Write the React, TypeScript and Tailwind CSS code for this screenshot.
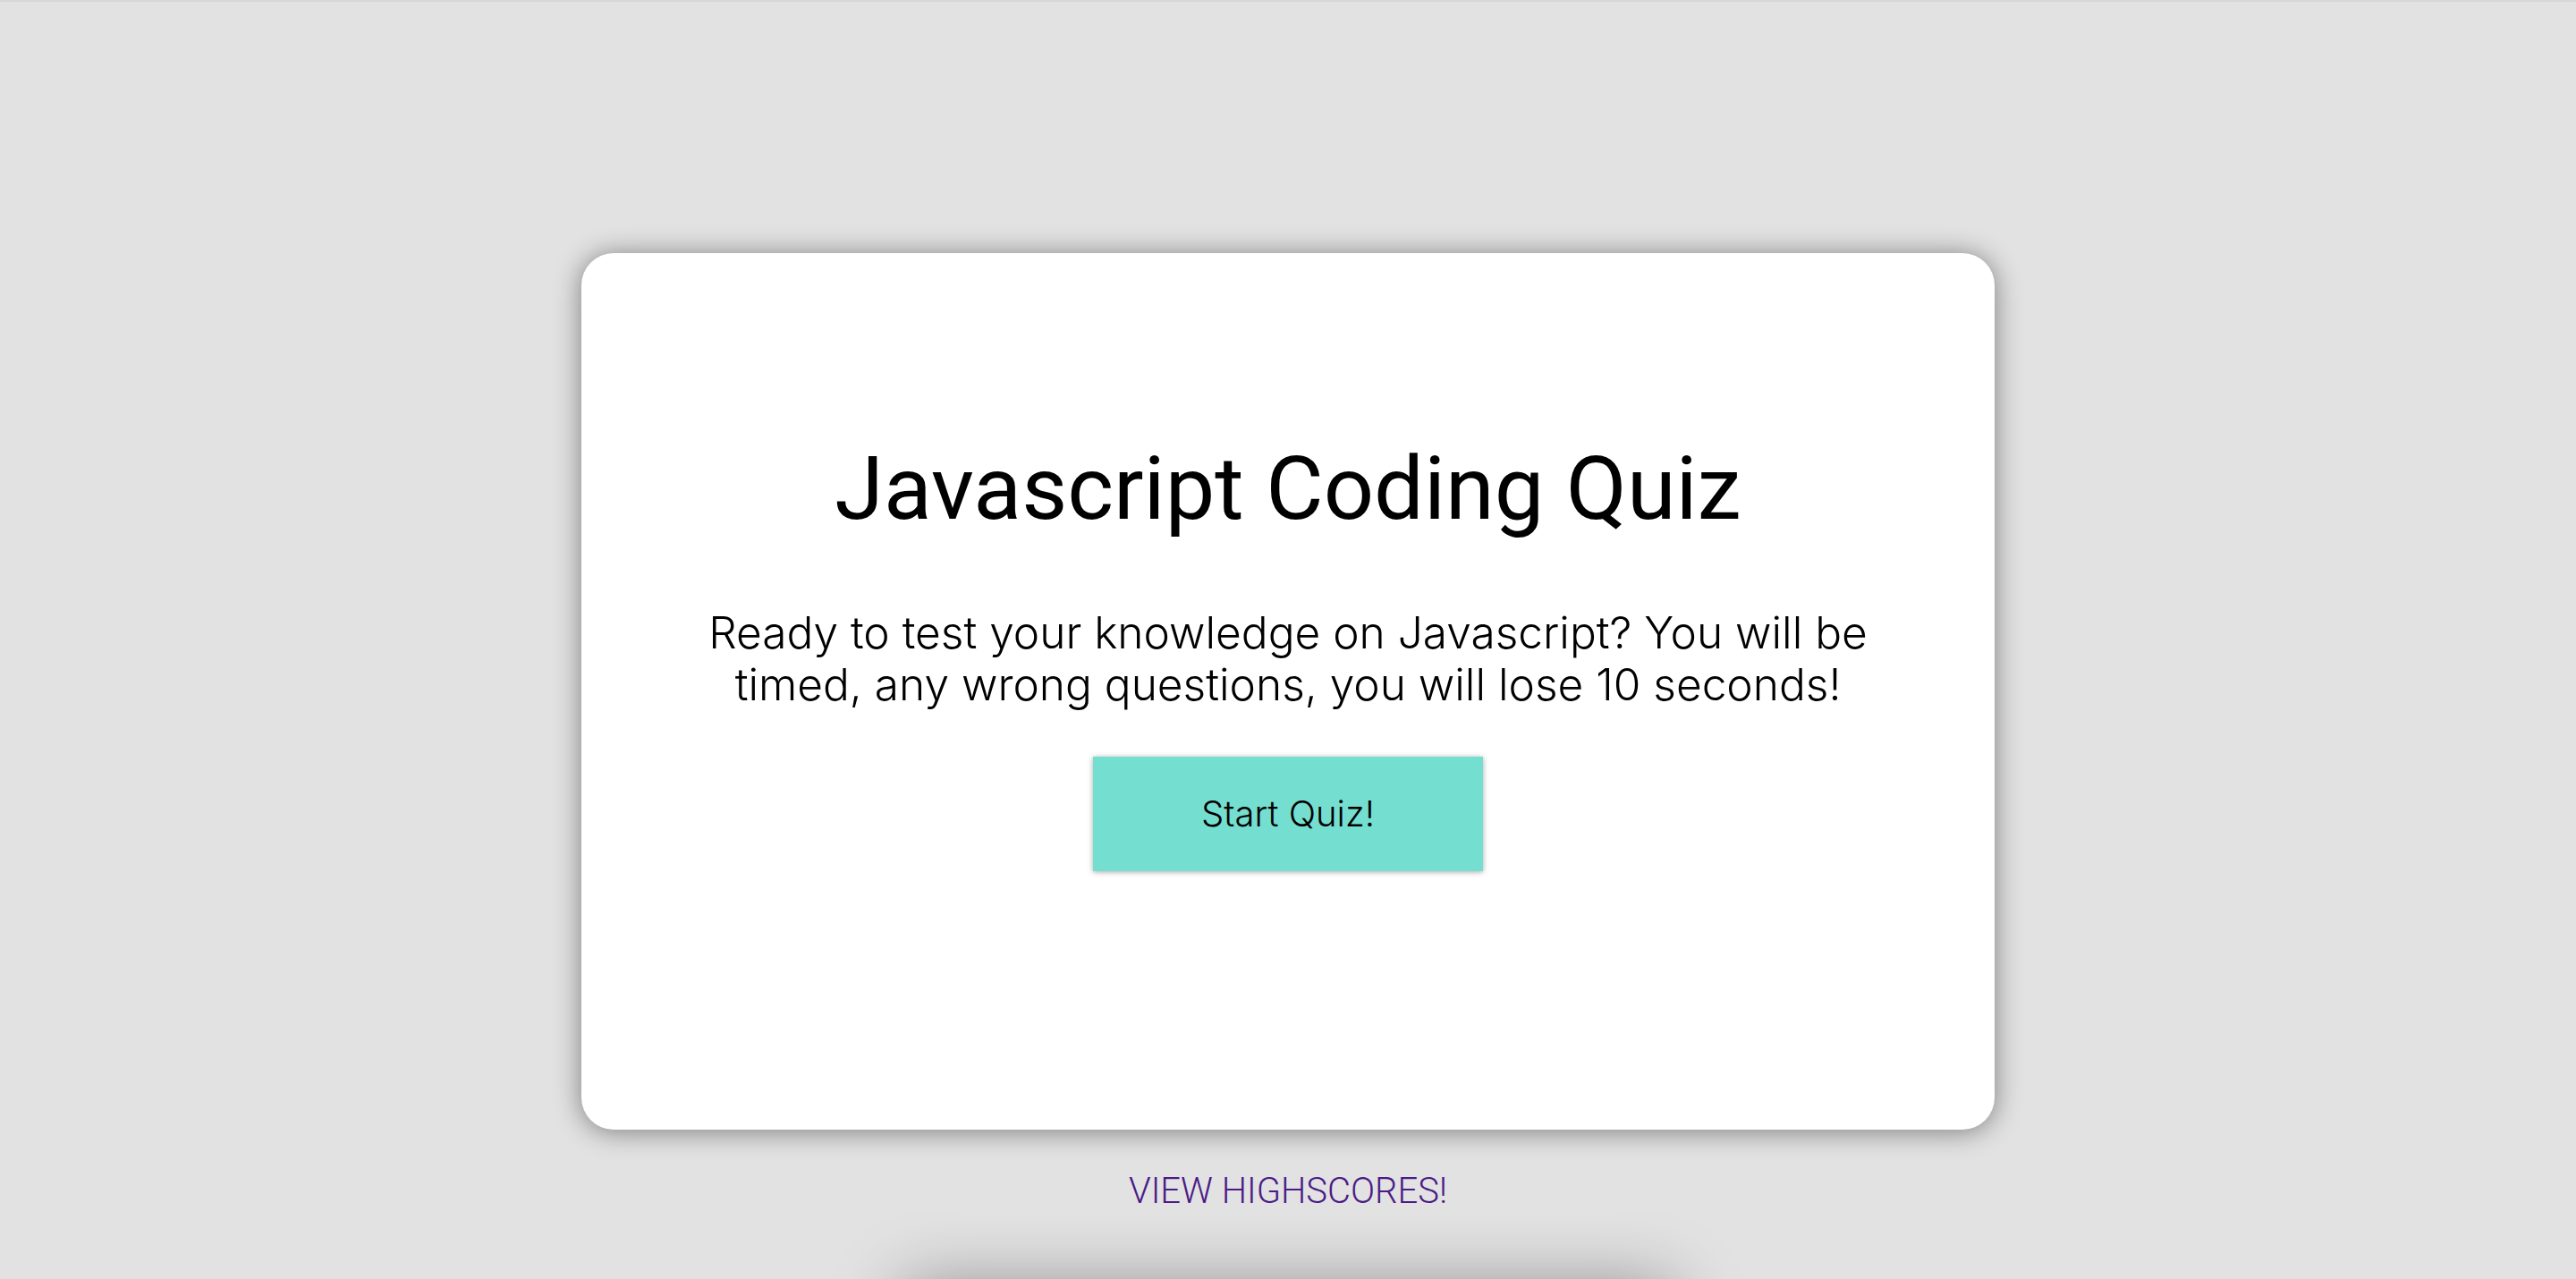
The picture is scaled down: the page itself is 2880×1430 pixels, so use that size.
export default function App() {
  return (
    <div className="min-h-screen w-full bg-[#e2e2e2] border-t-2 border-[#d6d6d6] flex flex-col items-center overflow-hidden">
      <div className="mt-[281px] w-[1580px] h-[980px] bg-white rounded-[36px] shadow-[0_2px_30px_rgba(0,0,0,0.45)] flex flex-col items-center pt-[189px]">
        <h1 className="text-[99px] leading-normal text-black font-normal font-['Roboto',sans-serif]">
          Javascript Coding Quiz
        </h1>
        <p className="mt-[57px] w-[1400px] text-center text-[49.6px] leading-[58px] font-light text-black font-['Inter',sans-serif]">
          Ready to test your knowledge on Javascript? You will be timed, any wrong questions, you will lose 10 seconds!
        </p>
        <button className="mt-[52px] w-[436px] h-[128px] bg-[#74ded0] text-black text-[40px] font-light shadow-[0_1px_6px_rgba(0,0,0,0.35)] font-['Inter',sans-serif]">
          Start Quiz!
        </button>
      </div>
      <a className="mt-[39px] text-[40px] leading-normal font-light text-[#4b1a87] font-['Roboto',sans-serif]">
        VIEW HIGHSCORES!
      </a>
      <div className="mt-[78px] w-[860px] h-[200px] bg-[#e2e2e2] shadow-[0_0_80px_rgba(0,0,0,0.4)]"></div>
    </div>
  );
}
